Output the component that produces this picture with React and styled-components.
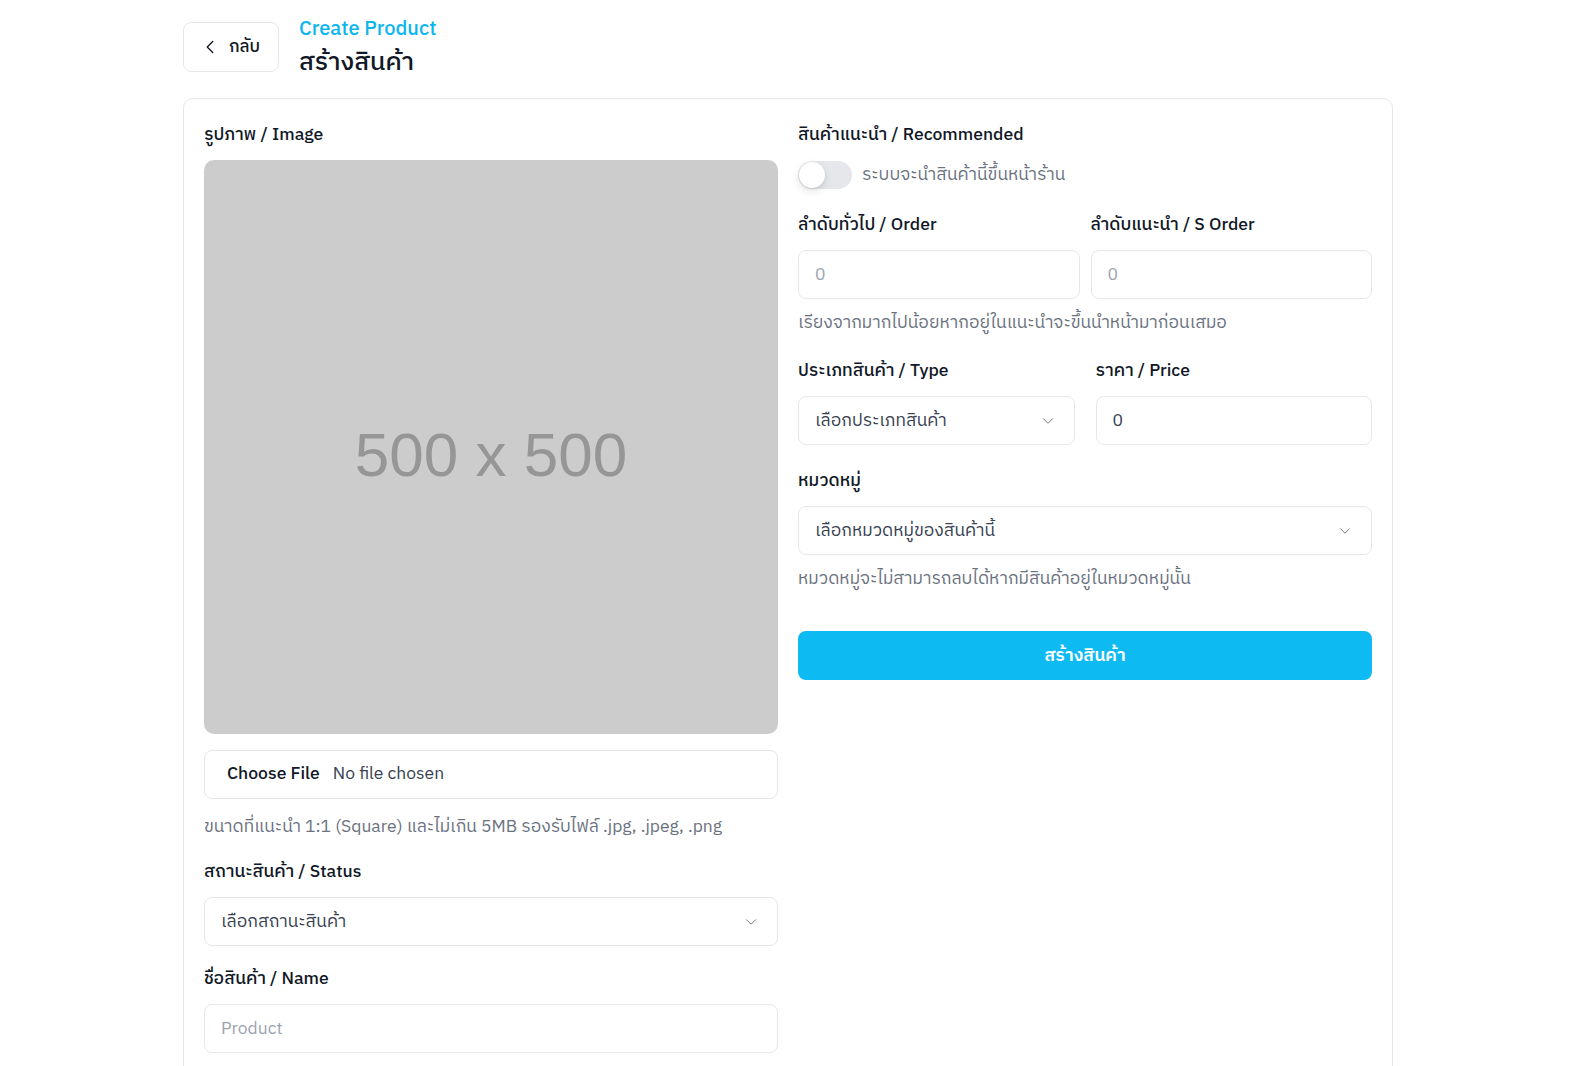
import React from "react";
import styled, { createGlobalStyle } from "styled-components";
import { ChevronLeft, ChevronDown } from "lucide-react";

const GlobalStyle = createGlobalStyle`
  * { box-sizing: border-box; }
  body {
    margin: 0;
    background: #fff;
    color: #111827;
    font-family: "IBM Plex Sans Thai", "Noto Sans Thai", "Noto Sans", "Liberation Sans", sans-serif;
    font-size: 17.5px;
  }
`;

const Page = styled.div`
  width: 1210px;
  margin-left: 183px;
  padding-top: 16px;
`;

const Header = styled.div`
  display: flex;
  align-items: flex-start;
  gap: 20px;
`;

const BackButton = styled.button`
  margin-top: 6px;
  height: 50px;
  width: 96px;
  display: flex;
  align-items: center;
  justify-content: center;
  gap: 8px;
  background: #fff;
  border: 1px solid #e5e7eb;
  border-radius: 8px;
  font: inherit;
  font-size: 17px;
  font-weight: 500;
  color: #111827;
  cursor: pointer;
  svg {
    margin-left: -3px;
  }
`;

const Titles = styled.div`
  display: flex;
  flex-direction: column;
  h4 {
    margin: 0;
    font-size: 20px;
    line-height: 28px;
    font-weight: 500;
    color: #0bb6ef;
  }
  h1 {
    margin: 3px 0 0;
    font-size: 25px;
    line-height: 32px;
    font-weight: 500;
    color: #111827;
  }
`;

const Card = styled.div`
  margin-top: 19px;
  border: 1px solid #e5e7eb;
  border-radius: 10px;
  padding: 21px 20px 40px;
  display: grid;
  grid-template-columns: 1fr 1fr;
  gap: 20px;
  align-items: start;
`;

const Column = styled.div`
  display: flex;
  flex-direction: column;
  gap: ${(p) => p.$gap}px;
`;

const Group = styled.div`
  display: flex;
  flex-direction: column;
`;

const Label = styled.label`
  padding-top: 2px;
  line-height: 26px;
  font-weight: 450;
  color: #111827;
  margin-bottom: 12px;
`;

const Hint = styled.p`
  margin: ${(p) => p.$top || 12}px 0 0;
  line-height: 24px;
  color: #6b7280;
`;

const Placeholder = styled.div`
  aspect-ratio: 1 / 1;
  width: 100%;
  background: #cccccc;
  border-radius: 10px;
  display: flex;
  align-items: center;
  justify-content: center;
  color: #969696;
  font-family: "Liberation Sans", Arial, sans-serif;
  font-size: 62px;
  padding-top: 14px;
`;

const FileInput = styled.input`
  margin-top: 16px;
  width: 100%;
  height: 49px;
  padding: 8px 20px 0;
  border: 1px solid #e5e7eb;
  border-radius: 8px;
  font: inherit;
  color: #374151;
  &::file-selector-button {
    border: none;
    background: none;
    font: inherit;
    font-weight: 500;
    color: #111827;
    padding: 0 9px 0 2px;
    cursor: pointer;
  }
`;

const Field = styled.input`
  width: 100%;
  height: 49px;
  padding: 0 16px;
  border: 1px solid #e5e7eb;
  border-radius: 8px;
  font: inherit;
  color: #374151;
  outline: none;
  &::placeholder {
    color: #9ca3af;
  }
`;

const SelectWrap = styled.div`
  position: relative;
  svg {
    position: absolute;
    right: 18px;
    top: 50%;
    transform: translateY(-50%);
    color: #6b7280;
    pointer-events: none;
  }
`;

const Select = styled.select`
  width: 100%;
  height: 49px;
  padding: 0 40px 0 16px;
  border: 1px solid #e5e7eb;
  border-radius: 8px;
  background: #fff;
  appearance: none;
  font: inherit;
  color: #374151;
  outline: none;
`;

const Pair = styled.div`
  display: grid;
  grid-template-columns: 1fr 1fr;
  gap: ${(p) => p.$gap}px;
`;

const ToggleRow = styled.div`
  display: flex;
  align-items: center;
  gap: 10px;
  height: 29px;
  color: #6b7280;
`;

const Track = styled.div`
  position: relative;
  width: 54px;
  height: 28px;
  border-radius: 14px;
  background: #e5e7eb;
`;

const Knob = styled.span`
  position: absolute;
  left: 1px;
  top: 1px;
  width: 26px;
  height: 26px;
  border-radius: 50%;
  background: #fff;
  box-shadow: 0 3px 8px rgba(0, 0, 0, 0.12), 0 1px 2px rgba(0, 0, 0, 0.08);
`;

const SubmitButton = styled.button`
  margin-top: 19px;
  height: 49px;
  width: 100%;
  border: none;
  border-radius: 8px;
  background: #0ebaf2;
  color: #fff;
  font: inherit;
  font-weight: 600;
  cursor: pointer;
`;

const SelectField = ({ children }) => (
  <SelectWrap>
    <Select defaultValue="">
      <option value="" disabled>
        {children}
      </option>
    </Select>
    <ChevronDown size={18} strokeWidth={1.25} />
  </SelectWrap>
);

const App = () => {
  return (
    <>
      <GlobalStyle />
      <Page>
        <Header>
          <BackButton>
            <ChevronLeft size={22} strokeWidth={1.5} />
            กลับ
          </BackButton>
          <Titles>
            <h4>Create Product</h4>
            <h1>สร้างสินค้า</h1>
          </Titles>
        </Header>

        <Card>
          <Column $gap={18}>
            <Group>
              <Label>รูปภาพ / Image</Label>
              <Placeholder>500 x 500</Placeholder>
              <FileInput type="file" />
              <Hint $top={16}>
                ขนาดที่แนะนำ 1:1 (Square) และไม่เกิน 5MB รองรับไฟล์ .jpg, .jpeg, .png
              </Hint>
            </Group>
            <Group>
              <Label>สถานะสินค้า / Status</Label>
              <SelectField>เลือกสถานะสินค้า</SelectField>
            </Group>
            <Group>
              <Label>ชื่อสินค้า / Name</Label>
              <Field placeholder="Product" />
            </Group>
          </Column>

          <Column $gap={21}>
            <Group>
              <Label>สินค้าแนะนำ / Recommended</Label>
              <ToggleRow>
                <Track>
                  <Knob />
                </Track>
                ระบบจะนำสินค้านี้ขึ้นหน้าร้าน
              </ToggleRow>
            </Group>
            <Group>
              <Pair $gap={11}>
                <Group>
                  <Label>ลำดับทั่วไป / Order</Label>
                  <Field placeholder="0" />
                </Group>
                <Group>
                  <Label>ลำดับแนะนำ / S Order</Label>
                  <Field placeholder="0" />
                </Group>
              </Pair>
              <Hint>เรียงจากมากไปน้อยหากอยู่ในแนะนำจะขึ้นนำหน้ามาก่อนเสมอ</Hint>
            </Group>
            <Pair $gap={21}>
              <Group>
                <Label>ประเภทสินค้า / Type</Label>
                <SelectField>เลือกประเภทสินค้า</SelectField>
              </Group>
              <Group>
                <Label>ราคา / Price</Label>
                <Field defaultValue="0" />
              </Group>
            </Pair>
            <Group>
              <Label>หมวดหมู่</Label>
              <SelectField>เลือกหมวดหมู่ของสินค้านี้</SelectField>
              <Hint>หมวดหมู่จะไม่สามารถลบได้หากมีสินค้าอยู่ในหมวดหมู่นั้น</Hint>
            </Group>
            <SubmitButton>สร้างสินค้า</SubmitButton>
          </Column>
        </Card>
      </Page>
    </>
  );
};

export default App;
